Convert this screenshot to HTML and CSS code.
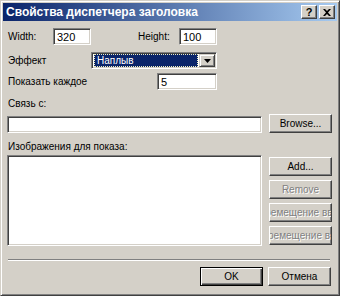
FILE: index.html
```html
<!DOCTYPE html>
<html lang="ru">

<head>
  <meta charset="UTF-8" />
  <meta name="viewport" content="width=device-width, initial-scale=1.0" />
  <title>Свойства диспетчера заголовка</title>
  <link rel="stylesheet" href="styles.css">
</head>

<body>
  <div class="window">
    <div class="titlebar">
      <span class="title">Свойства диспетчера заголовка</span>
      <div class="caption-btns">
        <button class="cap-btn">?</button>
        <button class="cap-btn">
          <svg width="8" height="7" viewBox="0 0 8 7">
            <path d="M0 0h2l2 2 2-2h2L5 3.5 8 7H6L4 5 2 7H0l3-3.5z" fill="#000" />
          </svg>
        </button>
      </div>
    </div>

    <div class="content">
      <div class="row row-size">
        <label class="lbl lbl-width">Width:</label>
        <div class="field field-num">320</div>
        <label class="lbl lbl-height">Height:</label>
        <div class="field field-num">100</div>
      </div>

      <div class="row row-effect">
        <label class="lbl lbl-effect">Эффект</label>
        <div class="field select">
          <span class="select-value">Наплыв</span>
          <span class="select-arrow">
            <svg width="7" height="4" viewBox="0 0 7 4">
              <path d="M0 0h7L3.5 4z" fill="#000" />
            </svg>
          </span>
        </div>
      </div>

      <div class="row row-every">
        <label class="lbl lbl-every">Показать каждое</label>
        <div class="field field-every">5</div>
      </div>

      <div class="lbl lbl-link">Связь с:</div>
      <div class="row row-link">
        <div class="field field-link"></div>
        <button class="btn">Browse...</button>
      </div>

      <div class="lbl lbl-images">Изображения для показа:</div>
      <div class="row row-list">
        <div class="field listbox"></div>
        <div class="side-btns">
          <button class="btn">Add...</button>
          <button class="btn" disabled>Remove</button>
          <button class="btn" disabled><span>Перемещение вверх</span></button>
          <button class="btn" disabled><span>Перемещение вниз</span></button>
        </div>
      </div>

      <div class="separator"></div>

      <div class="footer">
        <button class="btn btn-default">OK</button>
        <button class="btn">Отмена</button>
      </div>
    </div>
  </div>
</body>

</html>
```

FILE: styles.css
```css
* {
  box-sizing: border-box;
}

body {
  margin: 0;
  background: #d4d0c8;
  font-family: "Liberation Sans", Arial, sans-serif;
  font-size: 10px;
  color: #000;
}

/* окно */
.window {
  width: 340px;
  height: 296px;
  padding: 2px;
  background: #d4d0c8;
  border: 1px solid;
  border-color: #d4d0c8 #404040 #404040 #d4d0c8;
  box-shadow: inset 1px 1px #fff, inset -1px -1px #808080;
  display: flex;
  flex-direction: column;
}

.titlebar {
  height: 18px;
  flex-shrink: 0;
  display: flex;
  align-items: center;
  justify-content: space-between;
  padding: 0 2px 0 3px;
  background: linear-gradient(to right, #0a246a, #a6caf0);
}

.title {
  color: #fff;
  font-weight: bold;
  font-size: 12px;
  white-space: nowrap;
}

.caption-btns {
  display: flex;
  gap: 2px;
}

.cap-btn {
  width: 16px;
  height: 14px;
  padding: 0;
  display: flex;
  align-items: center;
  justify-content: center;
  background: #d4d0c8;
  border: 1px solid;
  border-color: #fff #404040 #404040 #fff;
  box-shadow: inset -1px -1px #808080;
  font-family: "Liberation Sans", Arial, sans-serif;
  font-size: 11px;
  font-weight: bold;
  line-height: 1;
  color: #000;
}

/* содержимое */
.content {
  flex: 1;
  display: flex;
  flex-direction: column;
  padding-left: 5px;
}

.row {
  display: flex;
  align-items: center;
}

.lbl {
  line-height: 12px;
  white-space: nowrap;
}

.field {
  height: 17px;
  background: #fff;
  border: 1px solid;
  border-color: #808080 #fff #fff #808080;
  box-shadow: inset 1px 1px #404040, inset -1px -1px #d4d0c8;
  padding: 2px 3px;
  line-height: 12px;
  font-size: 11px;
}

.row-size {
  margin-top: 7px;
}

.lbl-width {
  width: 45px;
}

.field-num {
  width: 38px;
}

.lbl-height {
  width: 41px;
  margin-left: 47px;
}

.row-effect {
  margin-top: 7px;
}

.lbl-effect {
  width: 83px;
}

.select {
  width: 126px;
  display: flex;
  padding: 1px 1px 1px 2px;
  gap: 1px;
}

.select-value {
  flex: 1;
  background: #0a246a;
  color: #fff;
  border: 1px dotted #f0f0c0;
  font-size: 10px;
  line-height: 11px;
  padding-left: 2px;
  overflow: hidden;
}

.select-arrow {
  width: 16px;
  display: flex;
  align-items: center;
  justify-content: center;
  background: #d4d0c8;
  border: 1px solid;
  border-color: #d4d0c8 #404040 #404040 #d4d0c8;
  box-shadow: inset 1px 1px #fff, inset -1px -1px #808080;
}

.row-every {
  margin-top: 4px;
}

.lbl-every {
  width: 149px;
}

.field-every {
  width: 60px;
}

.lbl-link {
  margin-top: 8px;
}

.row-link {
  align-items: flex-end;
  gap: 7px;
  margin-left: -1px;
  margin-top: 4px;
}

.field-link {
  width: 255px;
}

.btn {
  width: 63px;
  height: 19px;
  padding: 0;
  display: flex;
  align-items: center;
  justify-content: center;
  overflow: hidden;
  white-space: nowrap;
  background: #d4d0c8;
  border: 1px solid;
  border-color: #fff #404040 #404040 #fff;
  box-shadow: inset -1px -1px #808080;
  font-family: "Liberation Sans", Arial, sans-serif;
  font-size: 10px;
  color: #000;
}

.btn span {
  flex-shrink: 0;
}

.btn:disabled {
  color: #808080;
  text-shadow: 1px 1px #fff;
}

.lbl-images {
  margin-top: 8px;
}

.row-list {
  align-items: flex-start;
  gap: 7px;
  margin-left: -1px;
  margin-top: 2px;
}

.listbox {
  width: 255px;
  height: 91px;
}

.side-btns {
  display: flex;
  flex-direction: column;
  gap: 4px;
  margin-top: 2px;
}

.separator {
  height: 2px;
  margin: 13px 7px 0 0;
  border-top: 1px solid #808080;
  border-bottom: 1px solid #fff;
}

.footer {
  display: flex;
  justify-content: flex-end;
  gap: 5px;
  margin-top: 6px;
  padding-right: 6px;
}

.btn-default {
  border-color: #000;
  box-shadow: inset 1px 1px #fff, inset -1px -1px #404040, inset -2px -2px #808080;
}
```
